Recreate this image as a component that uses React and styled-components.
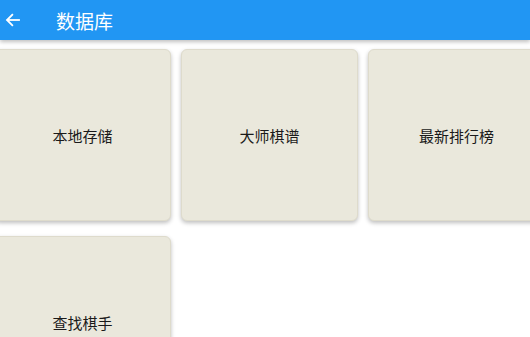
import React from 'react';
import styled, { createGlobalStyle } from 'styled-components';

const GlobalStyle = createGlobalStyle`
  body {
    margin: 0;
    background: #ffffff;
    font-family: Roboto, "Noto Sans CJK SC", sans-serif;
    overflow: hidden;
  }
`;

const Page = styled.div`
  width: 530px;
  height: 337px;
  overflow: hidden;
  position: relative;
`;

const AppBar = styled.header`
  height: 40px;
  background: #2196f3;
  display: flex;
  align-items: center;
  color: #ffffff;
  box-shadow: 0 2px 4px rgba(0, 0, 0, 0.25);
  position: relative;
  z-index: 1;
`;

const BackButton = styled.div`
  width: 26px;
  padding-left: 4px;
  display: flex;
  align-items: center;
`;

const Title = styled.h1`
  margin: 0 0 0 26px;
  font-size: 19px;
  font-weight: 400;
  font-family: Roboto, "Noto Sans CJK SC", sans-serif;
`;

const Grid = styled.div`
  display: grid;
  grid-template-columns: repeat(3, 177px);
  grid-auto-rows: 172px;
  column-gap: 10px;
  row-gap: 15px;
  margin-left: -6px;
  padding-top: 9px;
`;

const Card = styled.div`
  background: #eae8dc;
  border-radius: 6px;
  border: 1px solid #dedbcc;
  box-shadow: 0 2px 4px rgba(0, 0, 0, 0.26);
  display: flex;
  align-items: center;
  justify-content: center;
  font-size: 15px;
  color: #1a1a1a;
  box-sizing: border-box;
`;

const items = ['本地存储', '大师棋谱', '最新排行榜', '查找棋手'];

export default function App() {
  return (
    <Page>
      <GlobalStyle />
      <AppBar>
        <BackButton>
          <svg width="18" height="18" viewBox="0 0 24 24" fill="none" stroke="#fff" strokeWidth="2.4" strokeLinecap="square">
            <path d="M20 12H5" />
            <path d="M11 5l-7 7 7 7" />
          </svg>
        </BackButton>
        <Title>数据库</Title>
      </AppBar>
      <Grid>
        {items.map((t) => (
          <Card key={t}>{t}</Card>
        ))}
      </Grid>
    </Page>
  );
}
